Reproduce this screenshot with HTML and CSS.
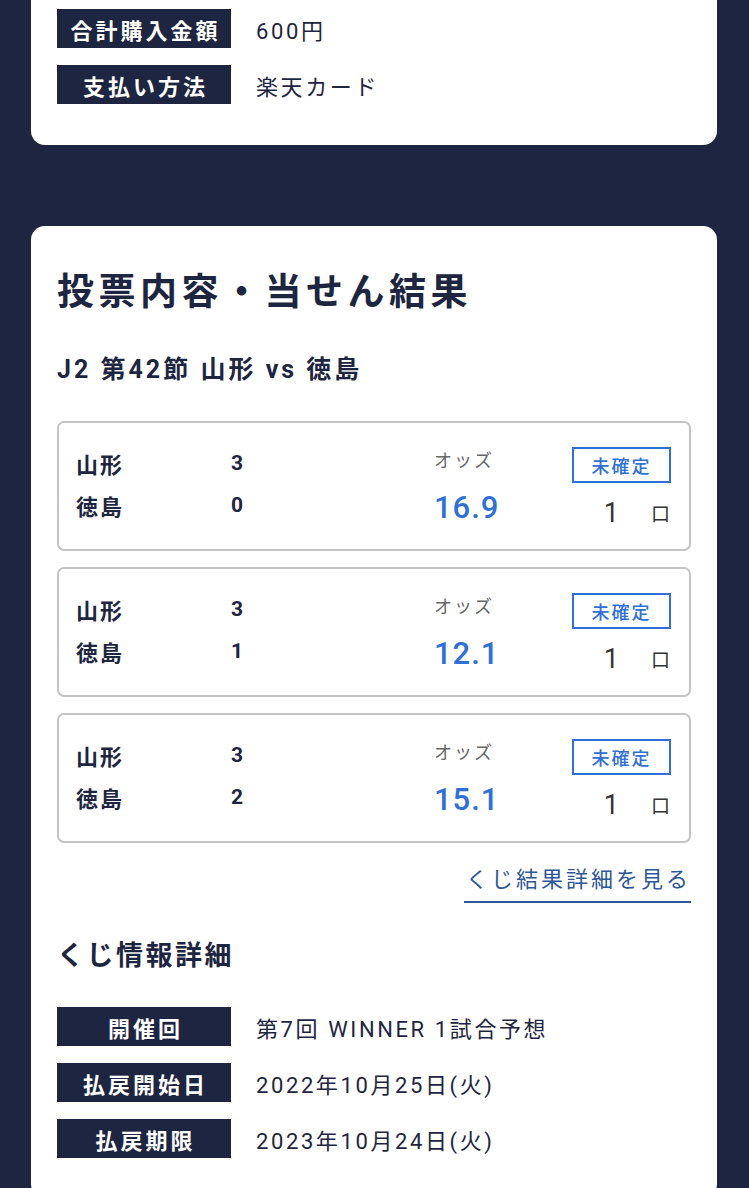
FILE: index.html
```html
<!DOCTYPE html>
<html lang="ja">
<head>
    <meta charset="UTF-8">
    <title>購入履歴詳細</title>
    <link rel="stylesheet" href="styles.css">
</head>
<body>
<div class="page">
    <div class="card card-top">
        <dl class="info">
            <div class="info-row">
                <dt>合計購入金額</dt>
                <dd>600円</dd>
            </div>
            <div class="info-row">
                <dt>支払い方法</dt>
                <dd>楽天カード</dd>
            </div>
        </dl>
    </div>

    <div class="card">
        <h2 class="title">投票内容・当せん結果</h2>
        <h3 class="match">J2 第42節 山形 vs 徳島</h3>

        <div class="bets">
            <div class="bet">
                <div class="teams">
                    <div class="team"><span class="name">山形</span><span class="score">3</span></div>
                    <div class="team"><span class="name">徳島</span><span class="score">0</span></div>
                </div>
                <div class="odds">
                    <span class="odds-label">オッズ</span>
                    <span class="odds-value">16.9</span>
                </div>
                <div class="status">
                    <span class="badge">未確定</span>
                    <span class="units"><span class="num">1</span><span class="unit">口</span></span>
                </div>
            </div>
            <div class="bet">
                <div class="teams">
                    <div class="team"><span class="name">山形</span><span class="score">3</span></div>
                    <div class="team"><span class="name">徳島</span><span class="score">1</span></div>
                </div>
                <div class="odds">
                    <span class="odds-label">オッズ</span>
                    <span class="odds-value">12.1</span>
                </div>
                <div class="status">
                    <span class="badge">未確定</span>
                    <span class="units"><span class="num">1</span><span class="unit">口</span></span>
                </div>
            </div>
            <div class="bet">
                <div class="teams">
                    <div class="team"><span class="name">山形</span><span class="score">3</span></div>
                    <div class="team"><span class="name">徳島</span><span class="score">2</span></div>
                </div>
                <div class="odds">
                    <span class="odds-label">オッズ</span>
                    <span class="odds-value">15.1</span>
                </div>
                <div class="status">
                    <span class="badge">未確定</span>
                    <span class="units"><span class="num">1</span><span class="unit">口</span></span>
                </div>
            </div>
        </div>

        <div class="more">
            <a href="#" class="more-link">くじ結果詳細を見る</a>
        </div>

        <h3 class="sub-title">くじ情報詳細</h3>
        <dl class="info">
            <div class="info-row">
                <dt>開催回</dt>
                <dd>第7回 WINNER 1試合予想</dd>
            </div>
            <div class="info-row">
                <dt>払戻開始日</dt>
                <dd>2022年10月25日(火)</dd>
            </div>
            <div class="info-row">
                <dt>払戻期限</dt>
                <dd>2023年10月24日(火)</dd>
            </div>
        </dl>
    </div>
</div>
</body>
</html>
```

FILE: styles.css
```css
body {
    background-color: #1e2540;
    color: #1e2540;
    font-family: Roboto, "Noto Sans CJK JP", sans-serif;
    margin: 0;
    padding: 0;
}

.page {
    padding: 0 32px 0 31px;
    display: flex;
    flex-direction: column;
    gap: 81px;
}

.card {
    background-color: #fff;
    border-radius: 14px;
    padding: 26px 26px 40px;
}

.card-top {
    border-radius: 0 0 14px 14px;
    padding-top: 9px;
    padding-bottom: 41px;
}

/* label / value rows */
.info {
    margin: 0;
    display: flex;
    flex-direction: column;
    gap: 17px;
}

.info-row {
    display: flex;
    align-items: center;
}

.info dt {
    width: 174px;
    height: 39px;
    background-color: #1e2540;
    color: #fff;
    font-weight: bold;
    font-size: 22px;
    letter-spacing: 3px;
    text-indent: 3px;
    display: flex;
    align-items: center;
    justify-content: center;
}

.info dd {
    margin: 0 0 0 25px;
    font-size: 22px;
    letter-spacing: 2.6px;
}

.title {
    margin: 13px 0 0;
    font-size: 37px;
    letter-spacing: 4.5px;
    line-height: 56px;
}

.match {
    margin: 32px 0 0;
    font-size: 25px;
    letter-spacing: 3px;
    line-height: 34px;
}

.bets {
    margin-top: 34px;
    display: flex;
    flex-direction: column;
    gap: 16px;
}

.bet {
    border: 2px solid #c4c4c4;
    border-radius: 7px;
    padding: 24px 18px 20px 17px;
    display: flex;
    align-items: stretch;
}

.teams {
    width: 358px;
    display: flex;
    flex-direction: column;
    gap: 12px;
    padding-top: 1px;
}

.team {
    display: flex;
    align-items: center;
    height: 30px;
}

.team .name {
    width: 155px;
    font-size: 22px;
    font-weight: bold;
    letter-spacing: 2px;
}

.team .score {
    font-size: 21px;
    font-weight: bold;
}

.odds {
    flex: 1;
    display: flex;
    flex-direction: column;
}

.odds-label {
    font-size: 18px;
    letter-spacing: 2px;
    color: #666;
    line-height: 28px;
}

.odds-value {
    margin-top: 13px;
    font-size: 31px;
    font-weight: 500;
    color: #2f6fd7;
    letter-spacing: 1px;
    line-height: 40px;
}

.status {
    display: flex;
    flex-direction: column;
    align-items: flex-end;
    gap: 14px;
}

.badge {
    width: 99px;
    height: 36px;
    box-sizing: border-box;
    border: 2px solid #2f6fd7;
    color: #2f6fd7;
    font-size: 18px;
    font-weight: 500;
    letter-spacing: 2px;
    display: flex;
    align-items: center;
    justify-content: center;
}

.units {
    display: flex;
    align-items: flex-end;
    color: #333;
    padding-right: 1px;
}

.units .num {
    font-size: 27px;
    line-height: 32px;
}

.units .unit {
    margin-left: 32px;
    font-size: 19px;
    line-height: 28px;
}

.more {
    margin-top: 18px;
    display: flex;
    justify-content: flex-end;
}

.more-link {
    color: #2d5796;
    text-decoration: none;
    font-size: 22px;
    letter-spacing: 3px;
    padding: 0 0 8px 2px;
    border-bottom: 2px solid #2d5796;
}

.sub-title {
    margin: 33px 0 31px;
    font-size: 27px;
    letter-spacing: 2.5px;
    line-height: 40px;
}
```
